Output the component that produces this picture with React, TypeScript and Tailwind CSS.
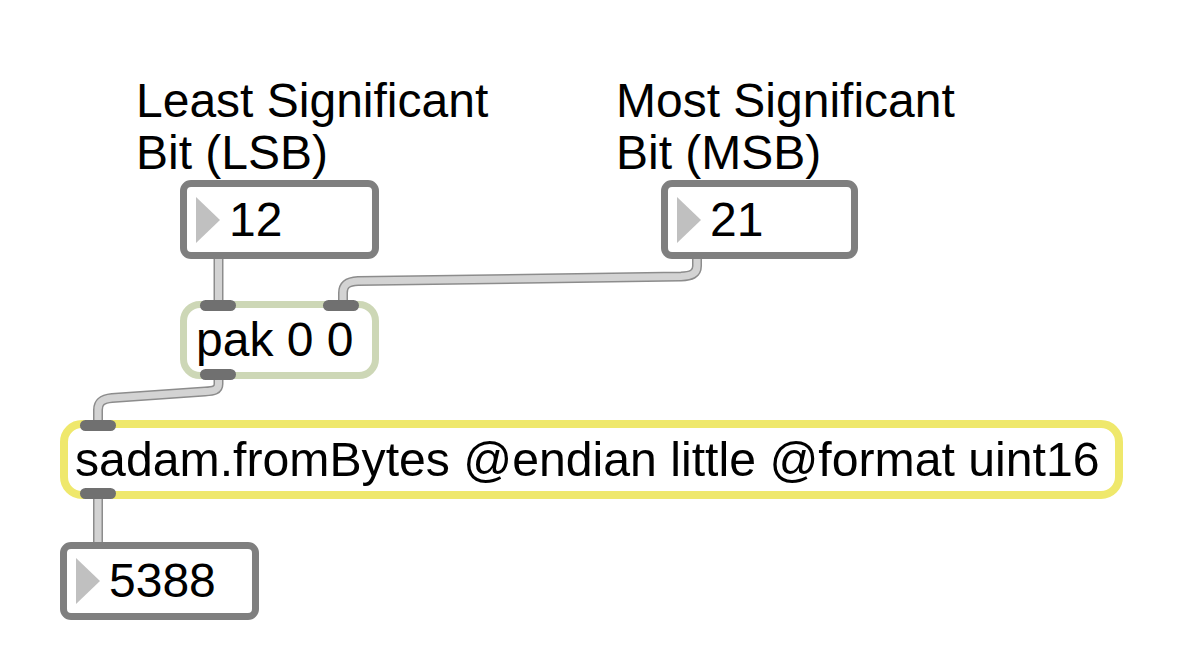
const font = "font-['Liberation_Sans',Arial,sans-serif]";

function NumberBox({ value, className }: { value: string; className: string }) {
  return (
    <div
      className={`absolute flex items-center rounded-[11px] border-[7px] border-[#7f7f7f] bg-white pl-[9px] ${className}`}
    >
      <svg width="24" height="46" viewBox="0 0 24 46" className="shrink-0">
        <polygon points="0,0 24,23 0,46" fill="#c0c0c0" />
      </svg>
      <span className="ml-[9px] text-[48px] leading-none text-black">{value}</span>
    </div>
  );
}

function Port({ className }: { className: string }) {
  return <div className={`absolute h-[11px] w-[36px] rounded-full bg-[#707070] ${className}`} />;
}

function Cable({ d }: { d: string }) {
  return (
    <g fill="none">
      <path d={d} stroke="#8c8c8c" strokeWidth={10} />
      <path d={d} stroke="#d3d3d3" strokeWidth={7} />
    </g>
  );
}

export default function App() {
  return (
    <div className={`relative h-[664px] w-[1188px] overflow-hidden bg-white ${font}`}>
      <svg className="absolute left-0 top-0" width="1188" height="664">
        <Cable d="M218.5 255 V304" />
        <Cable d="M697 255 V266 C697 274 691 276 681 276.5 L358 281 C347 281.5 343 285 343 293 V304" />
        <Cable d="M218.5 376 V384 C218.5 390 214 391 205 391.5 L112 398 C102 399 98 402 98 410 V424" />
        <Cable d="M98 496 V546" />
      </svg>

      <div className="absolute left-[136px] top-[75px] text-[48px] leading-[52px] text-black">
        Least Significant
        <br />
        Bit (LSB)
      </div>
      <div className="absolute left-[616px] top-[75px] text-[48px] leading-[52px] text-black">
        Most Significant
        <br />
        Bit (MSB)
      </div>

      <NumberBox value="12" className="left-[180px] top-[180px] h-[79px] w-[199px]" />
      <NumberBox value="21" className="left-[661px] top-[180px] h-[79px] w-[197px]" />

      <div className="absolute left-[180px] top-[301px] flex h-[78px] w-[199px] items-center rounded-[20px] border-[7px] border-[#cdd7b6] bg-white pl-[9px]">
        <span className="text-[48px] leading-none text-black">pak 0 0</span>
      </div>
      <Port className="left-[200px] top-[300px]" />
      <Port className="left-[323px] top-[300px]" />
      <Port className="left-[200px] top-[369px]" />

      <div className="absolute left-[60px] top-[420px] flex h-[79px] w-[1063px] items-center rounded-[22px] border-[8px] border-[#efe86c] bg-white pl-[7px]">
        <span className="whitespace-nowrap text-[48.2px] leading-none text-black">
          sadam.fromBytes @endian little @format uint16
        </span>
      </div>
      <Port className="left-[80px] top-[420px]" />
      <Port className="left-[80px] top-[488px]" />

      <NumberBox value="5388" className="left-[60px] top-[542px] h-[78px] w-[199px]" />
    </div>
  );
}
